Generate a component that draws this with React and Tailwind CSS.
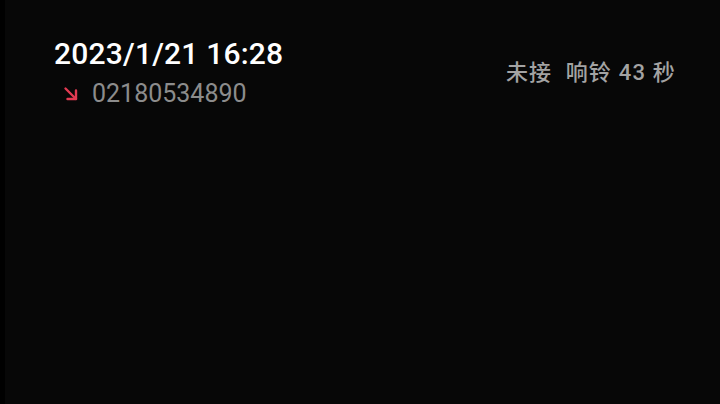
import React from 'react';

function MissedArrow() {
  return (
    <svg width="16" height="16" viewBox="0 0 16 16" fill="none" className="shrink-0">
      <path d="M2.5 2.5 L13 13" stroke="#e23a52" strokeWidth="2.4" strokeLinecap="round" />
      <path d="M4.5 13 H13 V4.5" stroke="#e23a52" strokeWidth="2.4" strokeLinecap="round" strokeLinejoin="round" />
    </svg>
  );
}

export default function App() {
  return (
    <div className="flex h-[404px] w-full bg-black" style={{ fontFamily: 'Roboto, "Noto Sans CJK SC", sans-serif' }}>
      <div className="ml-[5px] flex-1 bg-[#070707] pl-[49px] pr-[44px] pt-[34px]">
        <div className="flex items-center justify-between">
          <div className="flex flex-col">
            <div className="text-[30px] font-medium leading-[40px] tracking-[0.2px] text-white">2023/1/21 16:28</div>
            <div className="mt-[5px] flex items-center gap-[13px] pl-[9px]">
              <MissedArrow />
              <span className="text-[25px] leading-[30px] text-[#8c8c8c]">02180534890</span>
            </div>
          </div>
          <div className="mt-[2px] text-[22px] font-medium tracking-[1.2px] text-[#a3a3a3]">
            未接&nbsp;&nbsp;响铃 43 秒
          </div>
        </div>
      </div>
    </div>
  );
}
